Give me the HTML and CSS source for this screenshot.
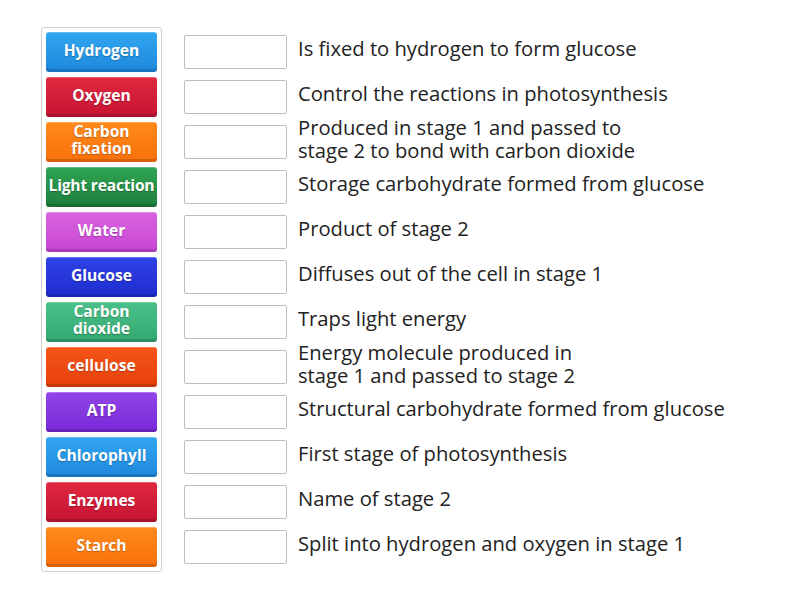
FILE: index.html
```html
<!DOCTYPE html>
<html>
<head>
<meta charset="utf-8">
<link rel="stylesheet" href="styles.css">
</head>
<body>
<div class="game">
  <div class="tiles">
    <div class="tile blue">Hydrogen</div>
    <div class="tile red">Oxygen</div>
    <div class="tile orange">Carbon fixation</div>
    <div class="tile green">Light reaction</div>
    <div class="tile magenta">Water</div>
    <div class="tile navy">Glucose</div>
    <div class="tile teal">Carbon dioxide</div>
    <div class="tile vermilion">cellulose</div>
    <div class="tile purple">ATP</div>
    <div class="tile blue">Chlorophyll</div>
    <div class="tile red">Enzymes</div>
    <div class="tile orange">Starch</div>
  </div>
  <div class="rows">
    <div class="row"><div class="slot"></div><div class="desc">Is fixed to hydrogen to form glucose</div></div>
    <div class="row"><div class="slot"></div><div class="desc">Control the reactions in photosynthesis</div></div>
    <div class="row"><div class="slot"></div><div class="desc">Produced in stage 1 and passed to<br>stage 2 to bond with carbon dioxide</div></div>
    <div class="row"><div class="slot"></div><div class="desc">Storage carbohydrate formed from glucose</div></div>
    <div class="row"><div class="slot"></div><div class="desc">Product of stage 2</div></div>
    <div class="row"><div class="slot"></div><div class="desc">Diffuses out of the cell in stage 1</div></div>
    <div class="row"><div class="slot"></div><div class="desc">Traps light energy</div></div>
    <div class="row"><div class="slot"></div><div class="desc">Energy molecule produced in<br>stage 1 and passed to stage 2</div></div>
    <div class="row"><div class="slot"></div><div class="desc">Structural carbohydrate formed from glucose</div></div>
    <div class="row"><div class="slot"></div><div class="desc">First stage of photosynthesis</div></div>
    <div class="row"><div class="slot"></div><div class="desc">Name of stage 2</div></div>
    <div class="row"><div class="slot"></div><div class="desc">Split into hydrogen and oxygen in stage 1</div></div>
  </div>
</div>
</body>
</html>
```

FILE: styles.css
```css
html, body {
  margin: 0;
  padding: 0;
  background: #ffffff;
}
body {
  font-family: "Open Sans", "DejaVu Sans", sans-serif;
}
.game {
  display: flex;
  align-items: flex-start;
  padding: 27px 0 0 41px;
}
.tiles {
  display: flex;
  flex-direction: column;
  gap: 5px;
  padding: 4px;
  border: 1px solid #cfcfcf;
  border-radius: 3px;
}
.tile {
  width: 111px;
  height: 40px;
  box-sizing: border-box;
  border-radius: 3px;
  display: flex;
  align-items: center;
  justify-content: center;
  text-align: center;
  color: #ffffff;
  font-weight: 700;
  font-size: 15.6px;
  line-height: 17px;
  padding: 0 1px 4px;
  text-shadow: 0 1px 1px rgba(0,0,0,0.25);
  box-shadow: inset 0 -3px 0 rgba(0,0,0,0.14), inset 0 1px 0 rgba(255,255,255,0.25);
}
.blue { background: linear-gradient(#32a6f0, #1e88dc); }
.red { background: linear-gradient(#e0283f, #c61433); }
.orange { background: linear-gradient(#ff8a1c, #f8700a); }
.green { background: linear-gradient(#2fa553, #1d7e3c); }
.magenta { background: linear-gradient(#d964df, #c844d3); }
.navy { background: linear-gradient(#3043e6, #1f2ccf); }
.teal { background: linear-gradient(#4cc08a, #32a86f); }
.vermilion { background: linear-gradient(#f65419, #e5410a); }
.purple { background: linear-gradient(#9245e8, #7828d6); }
.green.tile { letter-spacing: -0.2px; }
.rows {
  display: flex;
  flex-direction: column;
  gap: 5px;
  padding-top: 5px;
  margin-left: 22px;
}
.row {
  height: 40px;
  display: flex;
  align-items: center;
}
.slot {
  width: 103px;
  height: 34px;
  box-sizing: border-box;
  border: 1px solid #bdbdbd;
  border-radius: 2px;
  background: #ffffff;
  flex: none;
}
.desc {
  margin-left: 11px;
  font-size: 20.2px;
  line-height: 23px;
  color: #222222;
  white-space: nowrap;
  padding-bottom: 7px;
}
```
